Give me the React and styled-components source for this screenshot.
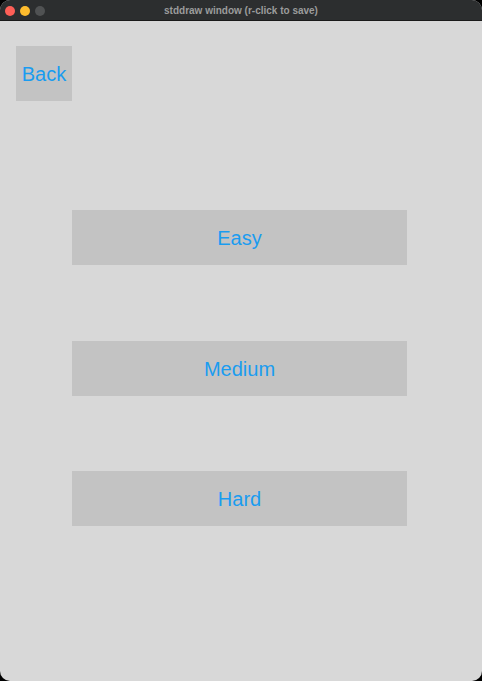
import React from "react";
import styled, { createGlobalStyle } from "styled-components";

const Global = createGlobalStyle`
  html, body { margin: 0; padding: 0; background: #000; }
  body { width: 482px; height: 681px; overflow: hidden; }
`;

const Window = styled.div`
  width: 482px;
  height: 681px;
  border-radius: 10px;
  overflow: hidden;
  display: flex;
  flex-direction: column;
  background: #d8d8d8;
`;

const TitleBar = styled.div`
  height: 20px;
  flex: none;
  background: #2c2e2f;
  border-bottom: 1px solid #1a1a1a;
  position: relative;
  display: flex;
  align-items: center;
  justify-content: center;
  font-family: "Liberation Sans", Arial, sans-serif;
  font-weight: bold;
  font-size: 10px;
  color: #9b9c9c;
`;

const Lights = styled.div`
  position: absolute;
  left: 5px;
  top: 6px;
  display: flex;
  gap: 5px;
`;

const Light = styled.span`
  width: 10px;
  height: 10px;
  border-radius: 50%;
  background: ${(p) => p.$c};
`;

const Content = styled.div`
  flex: 1;
  display: flex;
  flex-direction: column;
  padding: 25px 0 0 16px;
`;

const Btn = styled.div`
  background: #c3c3c3;
  color: #1a9cf0;
  font-family: "Liberation Sans", Arial, sans-serif;
  font-size: 20px;
  display: flex;
  align-items: center;
  justify-content: center;
  padding-top: 2px;
  height: 55px;
  width: ${(p) => p.$w}px;
  margin-left: ${(p) => p.$ml || 0}px;
  margin-top: ${(p) => p.$mt || 0}px;
  box-sizing: border-box;
`;

export default function App() {
  return (
    <>
      <Global />
      <Window>
        <TitleBar>
          <Lights>
            <Light $c="#fe5f57" />
            <Light $c="#febc2e" />
            <Light $c="#505253" />
          </Lights>
          stddraw window (r-click to save)
        </TitleBar>
        <Content>
          <Btn $w={56}>Back</Btn>
          <Btn $w={335} $ml={56} $mt={109}>Easy</Btn>
          <Btn $w={335} $ml={56} $mt={76}>Medium</Btn>
          <Btn $w={335} $ml={56} $mt={75}>Hard</Btn>
        </Content>
      </Window>
    </>
  );
}
